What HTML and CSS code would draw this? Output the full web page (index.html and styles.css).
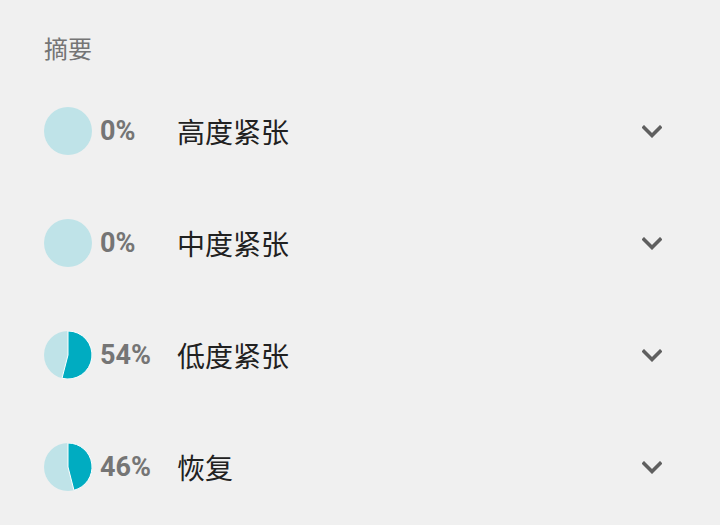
FILE: index.html
```html
<!DOCTYPE html>
<html lang="zh">
<head>
  <meta charset="UTF-8" />
  <meta name="viewport" content="width=device-width, initial-scale=1.0"/>
  <title>摘要</title>
  <link rel="stylesheet" href="styles.css">
</head>
<body>
  <div class="summary">
    <h2 class="summary-title">摘要</h2>

    <div class="row">
      <svg class="pie" viewBox="0 0 48 48" width="48" height="48">
        <circle cx="24" cy="24" r="24" class="pie-bg"/>
      </svg>
      <span class="pct">0%</span>
      <span class="label">高度紧张</span>
      <svg class="chevron" viewBox="0 0 20 13" width="20" height="13">
        <polyline points="2,2.5 10,10.5 18,2.5"/>
      </svg>
    </div>

    <div class="row">
      <svg class="pie" viewBox="0 0 48 48" width="48" height="48">
        <circle cx="24" cy="24" r="24" class="pie-bg"/>
      </svg>
      <span class="pct">0%</span>
      <span class="label">中度紧张</span>
      <svg class="chevron" viewBox="0 0 20 13" width="20" height="13">
        <polyline points="2,2.5 10,10.5 18,2.5"/>
      </svg>
    </div>

    <div class="row">
      <svg class="pie" viewBox="0 0 48 48" width="48" height="48">
        <circle cx="24" cy="24" r="24" class="pie-bg"/>
        <path class="pie-fill" d="M24 24 L24 0 A24 24 0 1 1 18.03 47.25 Z"/>
      </svg>
      <span class="pct">54%</span>
      <span class="label">低度紧张</span>
      <svg class="chevron" viewBox="0 0 20 13" width="20" height="13">
        <polyline points="2,2.5 10,10.5 18,2.5"/>
      </svg>
    </div>

    <div class="row">
      <svg class="pie" viewBox="0 0 48 48" width="48" height="48">
        <circle cx="24" cy="24" r="24" class="pie-bg"/>
        <path class="pie-fill" d="M24 24 L24 0 A24 24 0 0 1 29.97 47.25 Z"/>
      </svg>
      <span class="pct">46%</span>
      <span class="label">恢复</span>
      <svg class="chevron" viewBox="0 0 20 13" width="20" height="13">
        <polyline points="2,2.5 10,10.5 18,2.5"/>
      </svg>
    </div>
  </div>
</body>
</html>
```

FILE: styles.css
```css
:root {
  --bg: #f0f0f0;
  --muted: #757575;
  --text: #212121;
  --pie-light: #bfe3e8;
  --pie-dark: #00acc1;
}

* {
  margin: 0;
  padding: 0;
  box-sizing: border-box;
}

body {
  background: var(--bg);
  font-family: Roboto, "Noto Sans CJK SC", sans-serif;
}

.summary {
  padding: 34px 58px 0 44px;
}

.summary-title {
  font-family: "Noto Sans CJK SC", sans-serif;
  font-weight: 400;
  font-size: 24px;
  line-height: 28px;
  color: var(--muted);
  margin-bottom: 13px;
}

.row {
  display: flex;
  align-items: center;
  height: 112px;
}

.pie {
  flex: none;
  display: block;
}

.pie-bg {
  fill: var(--pie-light);
}

.pie-fill {
  fill: var(--pie-dark);
  stroke: #fff;
  stroke-width: 1;
  stroke-linejoin: round;
}

.pct {
  width: 77px;
  margin-left: 8px;
  font-size: 27px;
  font-weight: 700;
  color: var(--muted);
}

.label {
  flex: 1;
  font-family: "Noto Sans CJK SC", sans-serif;
  font-size: 28px;
  color: var(--text);
}

.chevron {
  flex: none;
  fill: none;
  stroke: #5f5f5f;
  stroke-width: 3.6;
  stroke-linecap: square;
}
```
